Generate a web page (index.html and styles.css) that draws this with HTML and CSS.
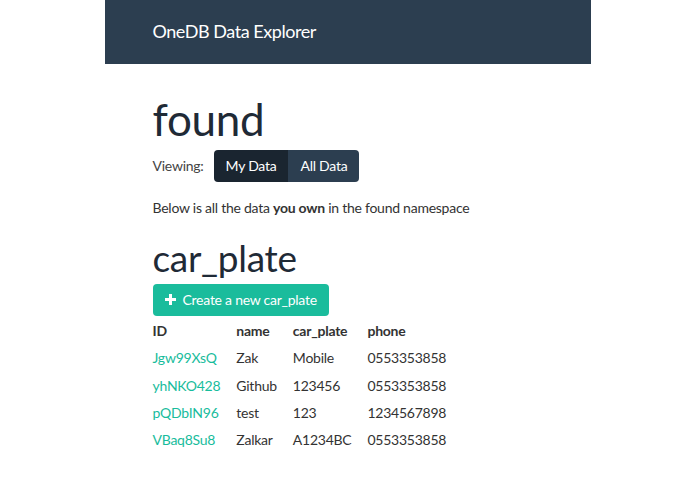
FILE: index.html
```html
<!DOCTYPE html>
<html lang="en">
<head>
  <meta charset="UTF-8">
  <meta name="viewport" content="width=device-width, initial-scale=1.0">
  <title>OneDB Data Explorer</title>
  <link rel="stylesheet" href="styles.css">
</head>
<body>
  <div class="page">
    <div class="navbar">
      <span class="brand">OneDB Data Explorer</span>
    </div>

    <div class="content">
      <h1>found</h1>

      <div class="viewing">
        <span class="viewing-label">Viewing:</span>
        <div class="btn-group">
          <span class="btn btn-dark active">My Data</span>
          <span class="btn btn-dark">All Data</span>
        </div>
      </div>

      <p class="intro">Below is all the data <strong>you own</strong> in the found namespace</p>

      <h2>car_plate</h2>

      <span class="btn btn-success">
        <svg class="plus" width="11" height="11" viewBox="0 0 11 11">
          <path d="M4 0h3v4h4v3H7v4H4V7H0V4h4z" fill="#fff"/>
        </svg>
        Create a new car_plate
      </span>

      <table class="data-table">
        <thead>
          <tr><th>ID</th><th>name</th><th>car_plate</th><th>phone</th></tr>
        </thead>
        <tbody>
          <tr><td><a href="#">Jgw99XsQ</a></td><td>Zak</td><td>Mobile</td><td>0553353858</td></tr>
          <tr><td><a href="#">yhNKO428</a></td><td>Github</td><td>123456</td><td>0553353858</td></tr>
          <tr><td><a href="#">pQDbIN96</a></td><td>test</td><td>123</td><td>1234567898</td></tr>
          <tr><td><a href="#">VBaq8Su8</a></td><td>Zalkar</td><td>A1234BC</td><td>0553353858</td></tr>
        </tbody>
      </table>
    </div>
  </div>
</body>
</html>
```

FILE: styles.css
```css
body {
  margin: 0;
  font-family: Lato, "Open Sans", sans-serif;
  font-size: 14px;
  line-height: 1.42;
  letter-spacing: -0.25px;
  color: #2c3e50;
  background-color: #fff;
}
.page {
  width: 486px;
  margin: 0 auto;
}
.navbar {
  height: 64px;
  background-color: #2c3e50;
  display: flex;
  align-items: center;
  padding: 0 48px;
}
.brand {
  color: #fff;
  font-size: 18px;
  letter-spacing: -0.45px;
}
.content {
  padding: 0 48px;
}
h1 {
  font-size: 44px;
  font-weight: 400;
  line-height: 1.1;
  letter-spacing: -0.3px;
  margin: 31px 0 7px;
  color: #1f2a36;
}
h2 {
  font-size: 37px;
  font-weight: 400;
  line-height: 1.1;
  letter-spacing: -0.3px;
  margin: 20px 0 5px;
  color: #1f2a36;
}
.viewing {
  display: flex;
  align-items: center;
  gap: 10px;
}
.viewing-label {
  color: #444;
}
.btn-group {
  display: flex;
  border-radius: 4px;
  overflow: hidden;
}
.btn {
  display: inline-flex;
  align-items: center;
  height: 32px;
  padding: 0 12px;
  font-size: 14px;
  color: #fff;
  box-sizing: border-box;
}
.btn-dark {
  background-color: #2c3e50;
}
.btn-dark.active {
  background-color: #1a2530;
}
.btn-success {
  background-color: #1abc9c;
  border-radius: 4px;
  padding: 0 12px;
  gap: 7px;
}
.intro {
  margin: 16px 0 0;
  color: #333;
}
.data-table {
  border-collapse: collapse;
  margin-top: 1px;
}
.data-table th,
.data-table td {
  text-align: left;
  padding: 4px 16px 3.5px 0;
  height: 19.5px;
  color: #333;
}
.data-table th {
  font-weight: 700;
}
.data-table a {
  color: #18bc9c;
  text-decoration: none;
}
```
